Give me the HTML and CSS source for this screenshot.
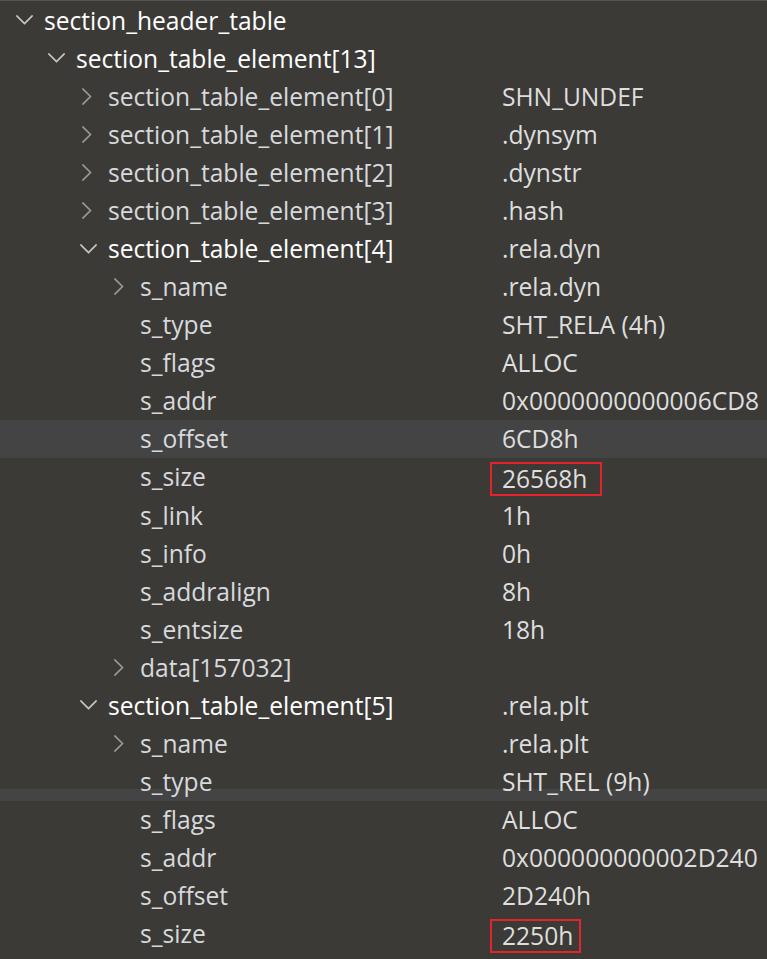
FILE: index.html
```html
<!DOCTYPE html>
<html>
<head>
<meta charset="utf-8">
<link rel="stylesheet" href="styles.css">
</head>
<body>
<div class="tree">
  <div class="row l0 open"><span class="tw"><svg class="down" viewBox="0 0 17 10"><polyline points="1,1 8.5,8.5 16,1"/></svg></span><span class="name">section_header_table</span><span class="val"></span></div>
  <div class="row l1 open"><span class="tw"><svg class="down" viewBox="0 0 17 10"><polyline points="1,1 8.5,8.5 16,1"/></svg></span><span class="name">section_table_element[13]</span><span class="val"></span></div>
  <div class="row l2"><span class="tw"><svg class="right" viewBox="0 0 10 17"><polyline points="1,1 8.5,8.5 1,16"/></svg></span><span class="name">section_table_element[0]</span><span class="val">SHN_UNDEF</span></div>
  <div class="row l2"><span class="tw"><svg class="right" viewBox="0 0 10 17"><polyline points="1,1 8.5,8.5 1,16"/></svg></span><span class="name">section_table_element[1]</span><span class="val">.dynsym</span></div>
  <div class="row l2"><span class="tw"><svg class="right" viewBox="0 0 10 17"><polyline points="1,1 8.5,8.5 1,16"/></svg></span><span class="name">section_table_element[2]</span><span class="val">.dynstr</span></div>
  <div class="row l2"><span class="tw"><svg class="right" viewBox="0 0 10 17"><polyline points="1,1 8.5,8.5 1,16"/></svg></span><span class="name">section_table_element[3]</span><span class="val">.hash</span></div>
  <div class="row l2 open"><span class="tw"><svg class="down" viewBox="0 0 17 10"><polyline points="1,1 8.5,8.5 16,1"/></svg></span><span class="name">section_table_element[4]</span><span class="val">.rela.dyn</span></div>
  <div class="row l3"><span class="tw"><svg class="right" viewBox="0 0 10 17"><polyline points="1,1 8.5,8.5 1,16"/></svg></span><span class="name">s_name</span><span class="val">.rela.dyn</span></div>
  <div class="row l3"><span class="tw"></span><span class="name">s_type</span><span class="val">SHT_RELA (4h)</span></div>
  <div class="row l3"><span class="tw"></span><span class="name">s_flags</span><span class="val">ALLOC</span></div>
  <div class="row l3"><span class="tw"></span><span class="name">s_addr</span><span class="val">0x0000000000006CD8</span></div>
  <div class="row l3 hover"><span class="tw"></span><span class="name">s_offset</span><span class="val">6CD8h</span></div>
  <div class="row l3"><span class="tw"></span><span class="name">s_size</span><span class="val"><span class="mark mark1">26568h</span></span></div>
  <div class="row l3"><span class="tw"></span><span class="name">s_link</span><span class="val">1h</span></div>
  <div class="row l3"><span class="tw"></span><span class="name">s_info</span><span class="val">0h</span></div>
  <div class="row l3"><span class="tw"></span><span class="name">s_addralign</span><span class="val">8h</span></div>
  <div class="row l3"><span class="tw"></span><span class="name">s_entsize</span><span class="val">18h</span></div>
  <div class="row l3"><span class="tw"><svg class="right" viewBox="0 0 10 17"><polyline points="1,1 8.5,8.5 1,16"/></svg></span><span class="name">data[157032]</span><span class="val"></span></div>
  <div class="row l2 open"><span class="tw"><svg class="down" viewBox="0 0 17 10"><polyline points="1,1 8.5,8.5 16,1"/></svg></span><span class="name">section_table_element[5]</span><span class="val">.rela.plt</span></div>
  <div class="row l3"><span class="tw"><svg class="right" viewBox="0 0 10 17"><polyline points="1,1 8.5,8.5 1,16"/></svg></span><span class="name">s_name</span><span class="val">.rela.plt</span></div>
  <div class="row l3 stripe"><span class="tw"></span><span class="name">s_type</span><span class="val">SHT_REL (9h)</span></div>
  <div class="row l3"><span class="tw"></span><span class="name">s_flags</span><span class="val">ALLOC</span></div>
  <div class="row l3"><span class="tw"></span><span class="name">s_addr</span><span class="val">0x000000000002D240</span></div>
  <div class="row l3"><span class="tw"></span><span class="name">s_offset</span><span class="val">2D240h</span></div>
  <div class="row l3"><span class="tw"></span><span class="name">s_size</span><span class="val"><span class="mark mark2">2250h</span></span></div>
</div>
</body>
</html>
```
FILE: styles.css
```css
html, body {
  margin: 0;
  padding: 0;
  background: #3b3a37;
}
body {
  font-family: "Open Sans", "Noto Sans", sans-serif;
  font-size: 24.6px;
  color: #dcdcdc;
  overflow: hidden;
}
.tree {
  border-top: 1px solid #545454;
  display: flex;
  flex-direction: column;
}
.row {
  height: 38.08px;
  display: flex;
  align-items: center;
  white-space: nowrap;
}
.row.l0 { padding-left: 16px; }
.row.l1 { padding-left: 48px; }
.row.l2 { padding-left: 80px; }
.row.l3 { padding-left: 112px; }
.tw {
  width: 28px;
  flex: none;
  display: flex;
  align-items: center;
}
.tw svg {
  fill: none;
  stroke-width: 1.6;
  stroke-linecap: square;
}
.tw svg.down {
  width: 17px;
  height: 10px;
  stroke: #c8c8c8;
}
.tw svg.right {
  width: 10px;
  height: 17px;
  margin-left: 2px;
  stroke: #9a9a9a;
}
.name {
  flex: none;
  color: #d7d9dc;
}
.row.open .name { color: #ffffff; }
.row.l0 .name { width: 458px; }
.row.l1 .name { width: 426px; }
.row.l2 .name { width: 394px; }
.row.l3 .name { width: 362px; }
.val {
  color: #dedede;
  display: flex;
  align-items: center;
}
.hover { background: #444444; }
.stripe {
  background: linear-gradient(to bottom, transparent calc(100% - 12px), #444444 calc(100% - 12px));
}
.mark {
  display: inline-block;
  box-sizing: border-box;
  height: 34px;
  line-height: 30px;
  margin-left: -12px;
  padding-left: 10px;
  border: 2px solid #e3242b;
  margin-top: 4px;
}
.mark1 { width: 112px; }
.mark2 { width: 91px; }
```
